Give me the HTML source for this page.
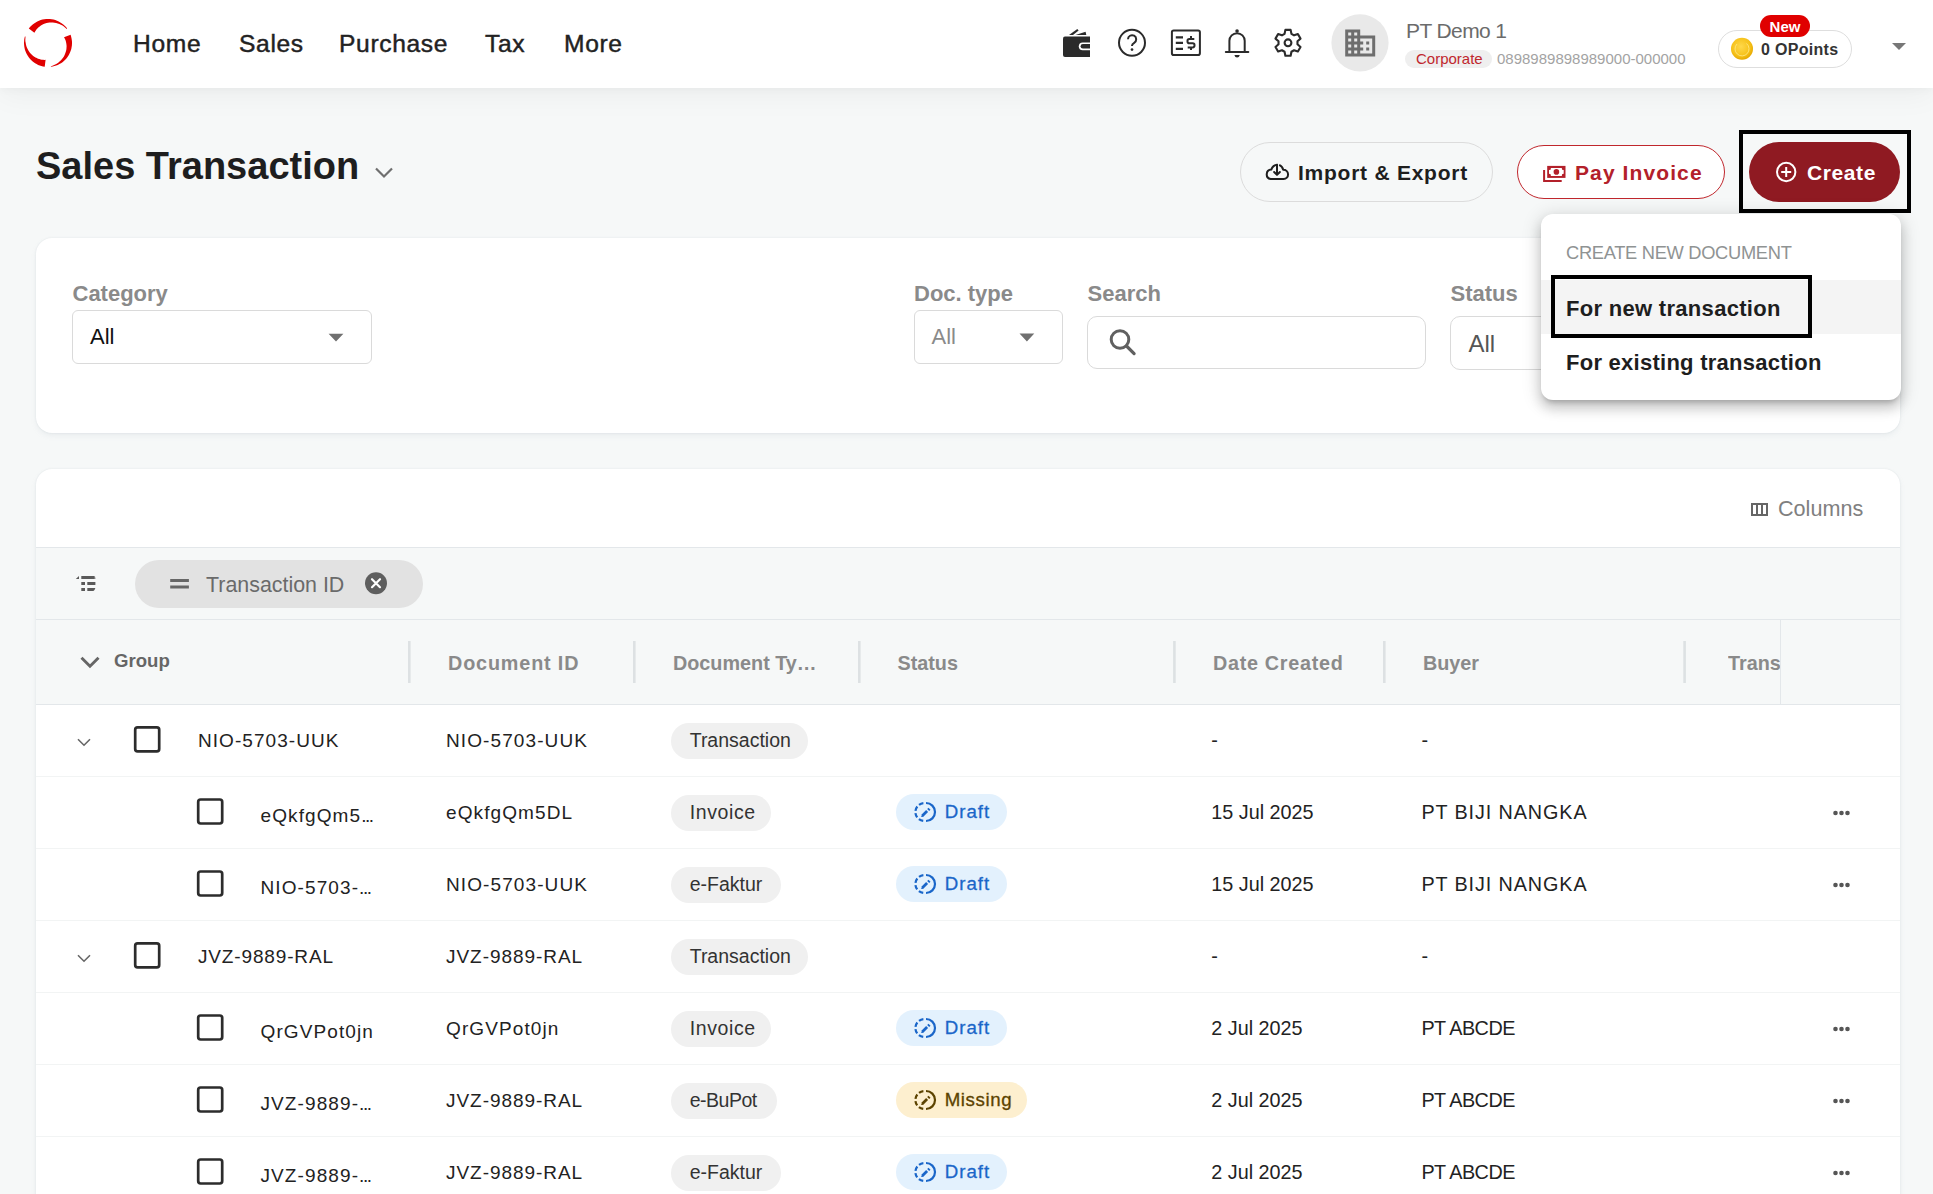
<!DOCTYPE html>
<html><head><meta charset="utf-8">
<style>
*{box-sizing:border-box;margin:0;padding:0}
html,body{width:1933px;height:1194px;overflow:hidden;background:#f6f8f8;font-family:"Liberation Sans",sans-serif;color:#222}
.a{position:absolute}
.t{position:absolute;line-height:1;white-space:nowrap}
.b{font-weight:bold}
svg{position:absolute;overflow:visible}
</style></head><body>
<!-- HEADER -->
<div class="a" style="left:0;top:0;width:1933px;height:88px;background:#fff;box-shadow:0 2px 8px rgba(0,0,0,0.03),0 8px 28px rgba(0,0,0,0.045)"></div>
<svg style="left:0;top:0" width="100" height="88"><path fill="#e00000" d="M28.8 28.6 L30.0 27.1 L31.3 25.8 L32.7 24.5 L34.1 23.4 L35.7 22.4 L37.3 21.5 L39.0 20.8 L40.7 20.1 L42.5 19.6 L44.3 19.3 L46.2 19.1 L48.0 19.0 L49.8 19.1 L51.7 19.3 L53.5 19.6 L55.3 20.1 L57.0 20.8 L58.7 21.5 L60.3 22.4 L61.9 23.4 L63.3 24.5 L64.7 25.8 L66.0 27.1 L67.2 28.6 L66.7 28.9 L65.3 27.7 L63.9 26.6 L62.5 25.6 L60.9 24.8 L59.3 24.1 L57.7 23.5 L56.1 23.0 L54.5 22.7 L52.8 22.6 L51.2 22.5 L49.6 22.6 L48.0 22.8 L46.5 23.1 L45.0 23.6 L43.6 24.1 L42.2 24.8 L40.9 25.5 L39.7 26.4 L38.6 27.3 L37.6 28.3 L36.6 29.3 L35.8 30.4 L35.1 31.6 L34.4 32.8Z M70.6 34.8 L71.1 36.5 L71.5 38.2 L71.8 40.0 L72.0 41.8 L72.0 43.6 L71.9 45.4 L71.6 47.2 L71.3 48.9 L70.7 50.7 L70.1 52.3 L69.3 54.0 L68.5 55.5 L67.5 57.0 L66.4 58.5 L65.2 59.8 L63.9 61.0 L62.5 62.2 L61.0 63.2 L59.4 64.1 L57.8 64.9 L56.2 65.6 L54.4 66.1 L52.7 66.5 L50.9 66.8 L50.9 66.2 L52.5 65.7 L54.1 65.0 L55.7 64.3 L57.1 63.4 L58.5 62.4 L59.8 61.3 L61.0 60.2 L62.0 59.0 L63.0 57.7 L63.9 56.4 L64.6 55.0 L65.2 53.6 L65.7 52.1 L66.1 50.7 L66.4 49.2 L66.5 47.7 L66.6 46.3 L66.5 44.9 L66.3 43.5 L66.0 42.1 L65.7 40.8 L65.2 39.5 L64.6 38.3 L64.0 37.2Z M44.7 66.8 L43.0 66.5 L41.3 66.1 L39.7 65.5 L38.1 64.9 L36.6 64.1 L35.1 63.2 L33.7 62.3 L32.4 61.2 L31.1 60.0 L29.9 58.8 L28.9 57.5 L27.9 56.1 L27.0 54.6 L26.2 53.1 L25.6 51.5 L25.0 49.9 L24.6 48.2 L24.3 46.5 L24.1 44.8 L24.0 43.1 L24.1 41.4 L24.2 39.7 L24.5 38.0 L24.9 36.4 L25.5 36.6 L25.4 38.2 L25.3 39.9 L25.4 41.5 L25.7 43.1 L26.0 44.7 L26.4 46.2 L27.0 47.7 L27.6 49.1 L28.4 50.4 L29.2 51.7 L30.1 52.9 L31.1 54.0 L32.1 55.0 L33.2 55.9 L34.3 56.8 L35.5 57.5 L36.8 58.1 L38.0 58.7 L39.3 59.1 L40.6 59.5 L41.8 59.7 L43.1 59.8 L44.4 59.9 L45.6 59.8Z"/></svg>
<div class="t" style="left:133px;top:32.2px;font-size:24.6px;letter-spacing:0.65px;-webkit-text-stroke:0.45px #222">Home</div>
<div class="t" style="left:239px;top:32.2px;font-size:24.6px;letter-spacing:0.65px;-webkit-text-stroke:0.45px #222">Sales</div>
<div class="t" style="left:339px;top:32.2px;font-size:24.6px;letter-spacing:0.65px;-webkit-text-stroke:0.45px #222">Purchase</div>
<div class="t" style="left:485px;top:32.2px;font-size:24.6px;letter-spacing:0.65px;-webkit-text-stroke:0.45px #222">Tax</div>
<div class="t" style="left:564px;top:32.2px;font-size:24.6px;letter-spacing:0.65px;-webkit-text-stroke:0.45px #222">More</div>

<svg style="left:0;top:0" width="1" height="1">
 <g fill="#2b2b2b">
  <path d="M1063 38.4 q0-2 2-2 h25 v20.5 h-25 q-2 0-2-2 z"/>
  <path d="M1069 34.9 L1077.3 29 L1078.6 30.6 L1073 34.9 Z"/>
  <path d="M1075.5 34.9 L1085.6 31.8 L1086.3 34.9 Z"/>
 </g>
 <path d="M1090 42.4 h-7.3 a3.9 3.9 0 0 0 0 7.8 h7.3 z" fill="#fff"/>
 <path d="M1090 44 h-7.1 a2.3 2.3 0 0 0 0 4.6 h7.1 z" fill="#2b2b2b"/>
 <circle cx="1132" cy="42.8" r="13" fill="none" stroke="#2b2b2b" stroke-width="2"/>
 <path d="M1128 39.3 a4.1 4.1 0 1 1 6.2 3.5 c-1.3 0.8 -2.2 1.5 -2.2 3 v0.3" fill="none" stroke="#2b2b2b" stroke-width="2"/>
 <circle cx="1132" cy="49.6" r="1.35" fill="#2b2b2b"/>
 <rect x="1171.9" y="30.5" width="28" height="24.5" rx="1.8" fill="none" stroke="#2b2b2b" stroke-width="2"/>
 <path d="M1175.8 37.4 h7.2 M1175.8 42.9 h7.2 M1175.8 48.8 h7.2" stroke="#2b2b2b" stroke-width="2.2"/>
 <path d="M1194.3 39 h-5 q-1.8 0 -1.8 1.8 v0.6 q0 1.8 1.8 1.8 h3.4 q1.8 0 1.8 1.8 v0.6 q0 1.8 -1.8 1.8 h-5 M1191 36 v2.6 M1191 47.4 v2.6" fill="none" stroke="#2b2b2b" stroke-width="2"/>
 <path d="M1229.4 52 v-11.2 a7.65 7.65 0 0 1 15.3 0 v11.2" fill="none" stroke="#2b2b2b" stroke-width="2"/>
 <path d="M1225.8 52 h22.5" stroke="#2b2b2b" stroke-width="2" stroke-linecap="round"/>
 <path d="M1234.4 54.9 h5.4 l-1 2.1 q-1.7 0.9 -3.4 0 z" fill="#2b2b2b"/><circle cx="1237.05" cy="31" r="1.8" fill="#2b2b2b"/>
 <path d="M1284.56 33.84 L1285.37 29.86 L1290.63 29.86 L1291.44 33.84 L1294.04 35.34 L1297.89 34.05 L1300.52 38.61 L1297.48 41.30 L1297.48 44.30 L1300.52 46.99 L1297.89 51.55 L1294.04 50.26 L1291.44 51.76 L1290.63 55.74 L1285.37 55.74 L1284.56 51.76 L1281.96 50.26 L1278.11 51.55 L1275.48 46.99 L1278.52 44.30 L1278.52 41.30 L1275.48 38.61 L1278.11 34.05 L1281.96 35.34Z" fill="none" stroke="#2b2b2b" stroke-width="2.1" stroke-linejoin="round"/>
 <circle cx="1288" cy="42.8" r="3.4" fill="none" stroke="#2b2b2b" stroke-width="2.1"/>
 <circle cx="1360" cy="42.8" r="28.6" fill="#e9e9e9"/>
 <g transform="translate(1342.2 25) scale(1.5)" fill="#6e6e6e"><path d="M12 7V3H2v18h20V7H12zM6 19H4v-2h2v2zm0-4H4v-2h2v2zm0-4H4V9h2v2zm0-4H4V5h2v2zm4 12H8v-2h2v2zm0-4H8v-2h2v2zm0-4H8V9h2v2zm0-4H8V5h2v2zm10 12h-8v-2h2v-2h-2v-2h2v-2h-2V9h8v10zm-2-8h-2v2h2v-2zm0 4h-2v2h2v-2z"/></g>
</svg>
<div class="t" style="left:1406px;top:20.4px;font-size:21px;letter-spacing:-0.6px;color:#6b6b6b">PT Demo 1</div>
<div class="a" style="left:1405px;top:50px;width:86.5px;height:18px;border-radius:9px;background:#efefef"></div>
<div class="t" style="left:1416px;top:51px;font-size:15px;color:#c0272d">Corporate</div>
<div class="t" style="left:1497px;top:51px;font-size:15px;color:#a3a3a3">0898989898989000-000000</div>
<div class="a" style="left:1717.5px;top:30px;width:134px;height:37.5px;border-radius:19px;border:1px solid #dedede;background:#fff"></div>
<svg style="left:0;top:0" width="1" height="1">
 <defs><radialGradient id="coin" cx="0.45" cy="0.4" r="0.6"><stop offset="0" stop-color="#ffd84a"/><stop offset="0.7" stop-color="#f6c21a"/><stop offset="1" stop-color="#e6a800"/></radialGradient></defs>
 <circle cx="1742" cy="48.8" r="11" fill="url(#coin)"/>
 <path d="M1737 44 a7 7 0 1 0 9.5 -0.5" fill="none" stroke="#ffe98a" stroke-width="1" opacity="0.8"/>
 <path d="M1892 43 h14 l-7 7 z" fill="#777"/>
</svg>
<div class="t b" style="left:1761px;top:41.5px;font-size:16px;letter-spacing:0.3px;color:#333">0 OPoints</div>
<div class="a" style="left:1760px;top:15px;width:50px;height:22px;border-radius:11px;background:#e00000"></div>
<div class="t b" style="left:1760px;top:19.4px;width:50px;text-align:center;font-size:15px;color:#fff">New</div>

<!--TITLE-->
<div class="t b" style="left:36px;top:147px;font-size:38px;color:#1e1e1e">Sales Transaction</div>
<svg style="left:0;top:0" width="1" height="1"><path d="M376 168.5 L384 176.5 L392 168.5" fill="none" stroke="#6f6f6f" stroke-width="2.2"/></svg>

<!--BUTTONS-->
<div class="a" style="left:1240px;top:142px;width:253px;height:60px;border-radius:30px;border:1px solid #dcdcdc"></div>
<svg style="left:0;top:0" width="1" height="1">
 <path d="M1279.2 164.9 a6.9 6.9 0 0 1 4 4.9 a4.1 4.1 0 0 1 0.4 9.3 h-13 a4.8 4.8 0 0 1 0.7 -9.5 a6.9 6.9 0 0 1 6.2 -4.8" fill="none" stroke="#1e1e1e" stroke-width="2" stroke-linejoin="round"/>
 <path d="M1277 164.8 v9.8 M1274.1 172 l2.9 2.9 l2.9 -2.9" fill="none" stroke="#1e1e1e" stroke-width="2" stroke-linecap="round" stroke-linejoin="round"/>
</svg>
<div class="t b" style="left:1298px;top:162.2px;font-size:21px;letter-spacing:0.75px;color:#1e1e1e">Import &amp; Export</div>
<div class="a" style="left:1517px;top:145px;width:208px;height:54px;border-radius:27px;border:1px solid #c0272d;background:#fff"></div>
<svg style="left:0;top:0" width="1" height="1">
 <rect x="1547.2" y="165.9" width="18.3" height="12" fill="#b3202a"/>
 <path d="M1550.9 167.9 h10.9 a1.9 1.9 0 0 0 1.9 2.2 v3.7 a1.9 1.9 0 0 0 -1.9 2.2 h-10.9 a1.9 1.9 0 0 0 -1.9 -2.2 v-3.7 a1.9 1.9 0 0 0 1.9 -2.2 z" fill="#fff"/>
 <circle cx="1556.4" cy="171.9" r="2.8" fill="#b3202a"/>
 <path d="M1544.1 170 v10.9 h17.6" fill="none" stroke="#b3202a" stroke-width="2"/>
</svg>
<div class="t b" style="left:1575px;top:161.9px;font-size:21px;letter-spacing:1.1px;color:#b3202a">Pay Invoice</div>
<div class="a" style="left:1749px;top:142px;width:151px;height:60px;border-radius:30px;background:#8f1a22"></div>
<svg style="left:0;top:0" width="1" height="1">
 <circle cx="1786.2" cy="172" r="9.2" fill="none" stroke="#fff" stroke-width="2"/>
 <path d="M1786.2 167 v10 M1781.2 172 h10" stroke="#fff" stroke-width="2"/>
</svg>
<div class="t b" style="left:1807px;top:161.9px;font-size:21px;letter-spacing:0.6px;color:#fff">Create</div>
<div class="a" style="left:1739px;top:129.5px;width:172px;height:83.5px;border:4px solid #000"></div>

<div class="a" style="left:36px;top:238px;width:1864px;height:195px;border-radius:16px;background:#fff;box-shadow:0 0 2px 0 rgba(145,158,171,0.2),0 3px 6px -1px rgba(145,158,171,0.14)"></div>
<div class="t b" style="left:72.5px;top:282.6px;font-size:22px;color:#8a8a8a">Category</div>
<div class="a" style="left:72px;top:310px;width:300px;height:54px;border-radius:6px;border:1px solid #dadada"></div>
<div class="t" style="left:90px;top:326.2px;font-size:22px;color:#111">All</div>
<div class="t b" style="left:914px;top:283.3px;font-size:22px;color:#8a8a8a">Doc. type</div>
<div class="a" style="left:913.5px;top:310.4px;width:149.5px;height:53.4px;border-radius:6px;border:1px solid #dadada"></div>
<div class="t" style="left:931.5px;top:326.3px;font-size:22px;color:#8a8a8a">All</div>
<div class="t b" style="left:1087.5px;top:283.3px;font-size:22px;color:#8a8a8a">Search</div>
<div class="a" style="left:1087.3px;top:316.3px;width:338.6px;height:53.2px;border-radius:10px;border:1px solid #dadada"></div>
<div class="t b" style="left:1450.5px;top:283px;font-size:22px;color:#8a8a8a">Status</div>
<div class="a" style="left:1450px;top:316.2px;width:300px;height:53.4px;border-radius:10px;border:1px solid #dadada"></div>
<div class="t" style="left:1468.5px;top:331.6px;font-size:24px;color:#555">All</div>
<svg style="left:0;top:0" width="1" height="1">
 <path d="M328.6 333.7 h14.8 l-7.4 7.7 z M1019.5 333.6 h14.8 l-7.4 7.8 z" fill="#707070"/>
 <circle cx="1120" cy="339.5" r="8.8" fill="none" stroke="#606060" stroke-width="3"/>
 <path d="M1126.5 346 l7.6 7.6" stroke="#606060" stroke-width="3.2" stroke-linecap="round"/>
</svg>

<div class="a" style="left:36px;top:469px;width:1864px;height:760px;border-radius:16px;background:#fff;box-shadow:0 0 2px 0 rgba(145,158,171,0.2),0 3px 6px -1px rgba(145,158,171,0.14);overflow:hidden">
 <div class="a" style="left:0;top:78px;width:1864px;height:158px;background:#f6f8f8;border-top:1px solid #e3e7ea;border-bottom:1px solid #e3e7ea"></div>
 <div class="a" style="left:0;top:150px;width:1864px;height:1px;background:#e3e7ea"></div>
</div>
<svg style="left:0;top:0" width="1" height="1"><g fill="none" stroke="#666" stroke-width="2"><rect x="1752" y="504" width="15" height="11"/><path d="M1757 504 v11 M1762 504 v11"/></g></svg>
<div class="t" style="left:1778px;top:497.5px;font-size:21.6px;color:#808080">Columns</div>
<svg style="left:0;top:0" width="1" height="1"><g fill="#5a5a5a"><path d="M75.8 579 L79 576 V579 Z"/><rect x="81.3" y="576" width="13" height="3"/><path d="M94.3 576 q1.1 0 1.1 3 h-1.1z"/><rect x="81.3" y="582" width="3.7" height="3"/><rect x="87.3" y="582" width="8.1" height="3"/><rect x="81.3" y="588" width="3.7" height="3"/><path d="M87.3 588 h8.1 q-1 3 -2 3 h-6.1z"/></g></svg>
<div class="a" style="left:135px;top:560px;width:288px;height:47.5px;border-radius:24px;background:#e2e2e2"></div>
<svg style="left:0;top:0" width="1" height="1"><path d="M170.2 580.5 h18.7 M170.2 587 h18.7" stroke="#666" stroke-width="3"/><circle cx="376" cy="583.2" r="11" fill="#5e5e5e"/><path d="M372 579.2 l8 8 M380 579.2 l-8 8" stroke="#fff" stroke-width="2.2" stroke-linecap="round"/></svg>
<div class="t" style="left:206px;top:575px;font-size:21.4px;color:#6a6a6a">Transaction ID</div>
<svg style="left:0;top:0" width="1" height="1"><path d="M81.5 657.8 l8.5 8.5 l8.5 -8.5" fill="none" stroke="#666" stroke-width="2.9"/>
<rect x="408.0" y="641" width="2.6" height="42" fill="#dde1e3"/>
<rect x="633.0" y="641" width="2.6" height="42" fill="#dde1e3"/>
<rect x="858.0" y="641" width="2.6" height="42" fill="#dde1e3"/>
<rect x="1173.1" y="641" width="2.6" height="42" fill="#dde1e3"/>
<rect x="1383.0" y="641" width="2.6" height="42" fill="#dde1e3"/>
<rect x="1683.3" y="641" width="2.6" height="42" fill="#dde1e3"/>
<rect x="1780" y="620" width="1" height="84" fill="#e3e7ea"/></svg>
<div class="t b" style="left:114px;top:652.2px;font-size:18.6px;color:#666">Group</div>
<div class="t b" style="left:448px;top:653.5px;font-size:19.8px;letter-spacing:0.85px;color:#8a8a8a">Document ID</div>
<div class="t b" style="left:673px;top:653.5px;font-size:19.8px;letter-spacing:0px;color:#8a8a8a">Document Ty…</div>
<div class="t b" style="left:897.5px;top:653.5px;font-size:19.8px;letter-spacing:0px;color:#8a8a8a">Status</div>
<div class="t b" style="left:1213px;top:653.5px;font-size:19.8px;letter-spacing:0.7px;color:#8a8a8a">Date Created</div>
<div class="t b" style="left:1423px;top:653.5px;font-size:19.8px;letter-spacing:0px;color:#8a8a8a">Buyer</div>
<div class="a" style="left:1728px;top:640px;width:52px;height:40px;overflow:hidden"><div class="t b" style="left:0;top:13.5px;font-size:19.8px;color:#8a8a8a">Transaction</div></div>
<div class="a" style="left:36px;top:776px;width:1864px;height:1px;background:#f2f4f4"></div>
<svg style="left:0;top:0" width="1" height="1"><path d="M78 739.2 l6 6 l6 -6" fill="none" stroke="#666" stroke-width="1.6"/><rect x="135.2" y="727.3" width="24" height="24" rx="2.4" fill="none" stroke="#2c2c2c" stroke-width="2.7"/></svg>
<div class="t" style="left:198px;top:730.8px;font-size:19px;letter-spacing:1.05px;color:#222">NIO-5703-UUK</div>
<div class="t" style="left:446px;top:730.8px;font-size:19px;letter-spacing:1.1px;color:#222">NIO-5703-UUK</div>
<div class="a" style="left:671px;top:723.2px;width:136.7px;height:35.8px;border-radius:18px;background:#f0f0f0"></div>
<div class="t" style="left:689.7px;top:730.5px;font-size:19.5px;letter-spacing:0px;color:#333">Transaction</div>
<div class="t" style="left:1211.3px;top:731.0px;font-size:19.8px;color:#222">-</div>
<div class="t" style="left:1421.4px;top:731.0px;font-size:19.8px;letter-spacing:0px;color:#222">-</div>
<div class="a" style="left:36px;top:848px;width:1864px;height:1px;background:#f2f4f4"></div>
<svg style="left:0;top:0" width="1" height="1"><rect x="198.2" y="799.5" width="24" height="24" rx="2.4" fill="none" stroke="#2c2c2c" stroke-width="2.7"/></svg>
<div class="t" style="left:260.5px;top:806.4px;font-size:19px;letter-spacing:1.1px;color:#222">eQkfgQm5<span style="letter-spacing:-1.5px">...</span></div>
<div class="t" style="left:446px;top:802.8px;font-size:19px;letter-spacing:1.1px;color:#222">eQkfgQm5DL</div>
<div class="a" style="left:671px;top:795.2px;width:100.4px;height:35.8px;border-radius:18px;background:#f0f0f0"></div>
<div class="t" style="left:689.7px;top:802.5px;font-size:19.5px;letter-spacing:0.6px;color:#333">Invoice</div>
<div class="a" style="left:896px;top:794.0px;width:111.0px;height:36px;border-radius:18px;background:#e3f1fd"></div>
<svg style="left:0;top:0" width="1" height="1"><g fill="none" stroke="#1a66c9" stroke-width="2.2"><path d="M926 803.0 A9 9 0 0 1 926 821.0"/><path d="M924.4 821.0 A9 9 0 0 1 924.4 803.0" stroke-dasharray="0 1.2 4.7 2.35 4.7 2.35 4.7 2.35 4.7 20"/><path d="M922.1 816.1 l5 -5" stroke-width="2.8"/><path d="M928.2 810.0 l1.3 -1.3" stroke-width="2.8"/></g><path d="M920.8 817.0 l1.9 -1.9 l0.2 1.9 z" fill="#1a66c9"/></svg>
<div class="t" style="left:944.7px;top:803.4px;font-size:18.7px;letter-spacing:1px;-webkit-text-stroke:0.3px #1a66c9;color:#1a66c9">Draft</div>
<svg style="left:0;top:0" width="1" height="1"><g fill="#555"><circle cx="1835.5" cy="813.0" r="2.3"/><circle cx="1841.5" cy="813.0" r="2.3"/><circle cx="1847.5" cy="813.0" r="2.3"/></g></svg>
<div class="t" style="left:1211.3px;top:803.0px;font-size:19.8px;color:#222">15 Jul 2025</div>
<div class="t" style="left:1421.4px;top:803.0px;font-size:19.8px;letter-spacing:0.9px;color:#222">PT BIJI NANGKA</div>
<div class="a" style="left:36px;top:920px;width:1864px;height:1px;background:#f2f4f4"></div>
<svg style="left:0;top:0" width="1" height="1"><rect x="198.2" y="871.5" width="24" height="24" rx="2.4" fill="none" stroke="#2c2c2c" stroke-width="2.7"/></svg>
<div class="t" style="left:260.5px;top:878.4px;font-size:19px;letter-spacing:1.1px;color:#222">NIO-5703-<span style="letter-spacing:-1.5px">...</span></div>
<div class="t" style="left:446px;top:874.8px;font-size:19px;letter-spacing:1.1px;color:#222">NIO-5703-UUK</div>
<div class="a" style="left:671px;top:867.2px;width:109.7px;height:35.8px;border-radius:18px;background:#f0f0f0"></div>
<div class="t" style="left:689.7px;top:874.5px;font-size:19.5px;letter-spacing:0px;color:#333">e-Faktur</div>
<div class="a" style="left:896px;top:866.0px;width:111.0px;height:36px;border-radius:18px;background:#e3f1fd"></div>
<svg style="left:0;top:0" width="1" height="1"><g fill="none" stroke="#1a66c9" stroke-width="2.2"><path d="M926 875.0 A9 9 0 0 1 926 893.0"/><path d="M924.4 893.0 A9 9 0 0 1 924.4 875.0" stroke-dasharray="0 1.2 4.7 2.35 4.7 2.35 4.7 2.35 4.7 20"/><path d="M922.1 888.1 l5 -5" stroke-width="2.8"/><path d="M928.2 882.0 l1.3 -1.3" stroke-width="2.8"/></g><path d="M920.8 889.0 l1.9 -1.9 l0.2 1.9 z" fill="#1a66c9"/></svg>
<div class="t" style="left:944.7px;top:875.4px;font-size:18.7px;letter-spacing:1px;-webkit-text-stroke:0.3px #1a66c9;color:#1a66c9">Draft</div>
<svg style="left:0;top:0" width="1" height="1"><g fill="#555"><circle cx="1835.5" cy="885.0" r="2.3"/><circle cx="1841.5" cy="885.0" r="2.3"/><circle cx="1847.5" cy="885.0" r="2.3"/></g></svg>
<div class="t" style="left:1211.3px;top:875.0px;font-size:19.8px;color:#222">15 Jul 2025</div>
<div class="t" style="left:1421.4px;top:875.0px;font-size:19.8px;letter-spacing:0.9px;color:#222">PT BIJI NANGKA</div>
<div class="a" style="left:36px;top:992px;width:1864px;height:1px;background:#f2f4f4"></div>
<svg style="left:0;top:0" width="1" height="1"><path d="M78 955.2 l6 6 l6 -6" fill="none" stroke="#666" stroke-width="1.6"/><rect x="135.2" y="943.3" width="24" height="24" rx="2.4" fill="none" stroke="#2c2c2c" stroke-width="2.7"/></svg>
<div class="t" style="left:198px;top:946.8px;font-size:19px;letter-spacing:0.85px;color:#222">JVZ-9889-RAL</div>
<div class="t" style="left:446px;top:946.8px;font-size:19px;letter-spacing:0.95px;color:#222">JVZ-9889-RAL</div>
<div class="a" style="left:671px;top:939.2px;width:136.7px;height:35.8px;border-radius:18px;background:#f0f0f0"></div>
<div class="t" style="left:689.7px;top:946.5px;font-size:19.5px;letter-spacing:0px;color:#333">Transaction</div>
<div class="t" style="left:1211.3px;top:947.0px;font-size:19.8px;color:#222">-</div>
<div class="t" style="left:1421.4px;top:947.0px;font-size:19.8px;letter-spacing:0px;color:#222">-</div>
<div class="a" style="left:36px;top:1064px;width:1864px;height:1px;background:#f2f4f4"></div>
<svg style="left:0;top:0" width="1" height="1"><rect x="198.2" y="1015.5" width="24" height="24" rx="2.4" fill="none" stroke="#2c2c2c" stroke-width="2.7"/></svg>
<div class="t" style="left:260.5px;top:1022.4px;font-size:19px;letter-spacing:1.1px;color:#222">QrGVPot0jn</div>
<div class="t" style="left:446px;top:1018.8px;font-size:19px;letter-spacing:1.1px;color:#222">QrGVPot0jn</div>
<div class="a" style="left:671px;top:1011.2px;width:100.4px;height:35.8px;border-radius:18px;background:#f0f0f0"></div>
<div class="t" style="left:689.7px;top:1018.5px;font-size:19.5px;letter-spacing:0.6px;color:#333">Invoice</div>
<div class="a" style="left:896px;top:1010.0px;width:111.0px;height:36px;border-radius:18px;background:#e3f1fd"></div>
<svg style="left:0;top:0" width="1" height="1"><g fill="none" stroke="#1a66c9" stroke-width="2.2"><path d="M926 1019.0 A9 9 0 0 1 926 1037.0"/><path d="M924.4 1037.0 A9 9 0 0 1 924.4 1019.0" stroke-dasharray="0 1.2 4.7 2.35 4.7 2.35 4.7 2.35 4.7 20"/><path d="M922.1 1032.1 l5 -5" stroke-width="2.8"/><path d="M928.2 1026.0 l1.3 -1.3" stroke-width="2.8"/></g><path d="M920.8 1033.0 l1.9 -1.9 l0.2 1.9 z" fill="#1a66c9"/></svg>
<div class="t" style="left:944.7px;top:1019.4px;font-size:18.7px;letter-spacing:1px;-webkit-text-stroke:0.3px #1a66c9;color:#1a66c9">Draft</div>
<svg style="left:0;top:0" width="1" height="1"><g fill="#555"><circle cx="1835.5" cy="1029.0" r="2.3"/><circle cx="1841.5" cy="1029.0" r="2.3"/><circle cx="1847.5" cy="1029.0" r="2.3"/></g></svg>
<div class="t" style="left:1211.3px;top:1019.0px;font-size:19.8px;color:#222">2 Jul 2025</div>
<div class="t" style="left:1421.4px;top:1019.0px;font-size:19.8px;letter-spacing:-0.5px;color:#222">PT ABCDE</div>
<div class="a" style="left:36px;top:1136px;width:1864px;height:1px;background:#f2f4f4"></div>
<svg style="left:0;top:0" width="1" height="1"><rect x="198.2" y="1087.5" width="24" height="24" rx="2.4" fill="none" stroke="#2c2c2c" stroke-width="2.7"/></svg>
<div class="t" style="left:260.5px;top:1094.3px;font-size:19px;letter-spacing:1.1px;color:#222">JVZ-9889-<span style="letter-spacing:-1.5px">...</span></div>
<div class="t" style="left:446px;top:1090.8px;font-size:19px;letter-spacing:0.95px;color:#222">JVZ-9889-RAL</div>
<div class="a" style="left:671px;top:1083.2px;width:105.5px;height:35.8px;border-radius:18px;background:#f0f0f0"></div>
<div class="t" style="left:689.7px;top:1090.5px;font-size:19.5px;letter-spacing:-0.5px;color:#333">e-BuPot</div>
<div class="a" style="left:896px;top:1082.0px;width:130.8px;height:36px;border-radius:18px;background:#fdefcf"></div>
<svg style="left:0;top:0" width="1" height="1"><g fill="none" stroke="#5c4300" stroke-width="2.2"><path d="M926 1091.0 A9 9 0 0 1 926 1109.0"/><path d="M924.4 1109.0 A9 9 0 0 1 924.4 1091.0" stroke-dasharray="0 1.2 4.7 2.35 4.7 2.35 4.7 2.35 4.7 20"/><path d="M922.1 1104.1 l5 -5" stroke-width="2.8"/><path d="M928.2 1098.0 l1.3 -1.3" stroke-width="2.8"/></g><path d="M920.8 1105.0 l1.9 -1.9 l0.2 1.9 z" fill="#5c4300"/></svg>
<div class="t" style="left:944.7px;top:1091.4px;font-size:18.7px;letter-spacing:0.6px;-webkit-text-stroke:0.3px #5c4300;color:#5c4300">Missing</div>
<svg style="left:0;top:0" width="1" height="1"><g fill="#555"><circle cx="1835.5" cy="1101.0" r="2.3"/><circle cx="1841.5" cy="1101.0" r="2.3"/><circle cx="1847.5" cy="1101.0" r="2.3"/></g></svg>
<div class="t" style="left:1211.3px;top:1091.0px;font-size:19.8px;color:#222">2 Jul 2025</div>
<div class="t" style="left:1421.4px;top:1091.0px;font-size:19.8px;letter-spacing:-0.5px;color:#222">PT ABCDE</div>
<div class="a" style="left:36px;top:1208px;width:1864px;height:1px;background:#f2f4f4"></div>
<svg style="left:0;top:0" width="1" height="1"><rect x="198.2" y="1159.5" width="24" height="24" rx="2.4" fill="none" stroke="#2c2c2c" stroke-width="2.7"/></svg>
<div class="t" style="left:260.5px;top:1166.3px;font-size:19px;letter-spacing:1.1px;color:#222">JVZ-9889-<span style="letter-spacing:-1.5px">...</span></div>
<div class="t" style="left:446px;top:1162.8px;font-size:19px;letter-spacing:0.95px;color:#222">JVZ-9889-RAL</div>
<div class="a" style="left:671px;top:1155.2px;width:109.7px;height:35.8px;border-radius:18px;background:#f0f0f0"></div>
<div class="t" style="left:689.7px;top:1162.5px;font-size:19.5px;letter-spacing:0px;color:#333">e-Faktur</div>
<div class="a" style="left:896px;top:1154.0px;width:111.0px;height:36px;border-radius:18px;background:#e3f1fd"></div>
<svg style="left:0;top:0" width="1" height="1"><g fill="none" stroke="#1a66c9" stroke-width="2.2"><path d="M926 1163.0 A9 9 0 0 1 926 1181.0"/><path d="M924.4 1181.0 A9 9 0 0 1 924.4 1163.0" stroke-dasharray="0 1.2 4.7 2.35 4.7 2.35 4.7 2.35 4.7 20"/><path d="M922.1 1176.1 l5 -5" stroke-width="2.8"/><path d="M928.2 1170.0 l1.3 -1.3" stroke-width="2.8"/></g><path d="M920.8 1177.0 l1.9 -1.9 l0.2 1.9 z" fill="#1a66c9"/></svg>
<div class="t" style="left:944.7px;top:1163.4px;font-size:18.7px;letter-spacing:1px;-webkit-text-stroke:0.3px #1a66c9;color:#1a66c9">Draft</div>
<svg style="left:0;top:0" width="1" height="1"><g fill="#555"><circle cx="1835.5" cy="1173.0" r="2.3"/><circle cx="1841.5" cy="1173.0" r="2.3"/><circle cx="1847.5" cy="1173.0" r="2.3"/></g></svg>
<div class="t" style="left:1211.3px;top:1163.0px;font-size:19.8px;color:#222">2 Jul 2025</div>
<div class="t" style="left:1421.4px;top:1163.0px;font-size:19.8px;letter-spacing:-0.5px;color:#222">PT ABCDE</div>
<div class="a" style="left:1541px;top:214px;width:360px;height:186px;border-radius:12px;background:#fff;box-shadow:0 8px 12px 1px rgba(0,0,0,0.14),0 3px 18px 3px rgba(0,0,0,0.12),0 5px 5px -3px rgba(0,0,0,0.2)"></div>
<div class="t" style="left:1566px;top:244.4px;font-size:18.3px;letter-spacing:-0.3px;color:#8f9393">CREATE NEW DOCUMENT</div>
<div class="a" style="left:1541px;top:280px;width:360px;height:54px;background:#f4f4f4"></div>
<div class="t b" style="left:1566px;top:297.8px;font-size:22px;letter-spacing:0.3px;color:#1e1e1e">For new transaction</div>
<div class="t b" style="left:1566px;top:352px;font-size:22px;letter-spacing:0.26px;color:#1e1e1e">For existing transaction</div>
<div class="a" style="left:1550.6px;top:274.8px;width:261px;height:63.4px;border:4px solid #000"></div>

</body></html>
